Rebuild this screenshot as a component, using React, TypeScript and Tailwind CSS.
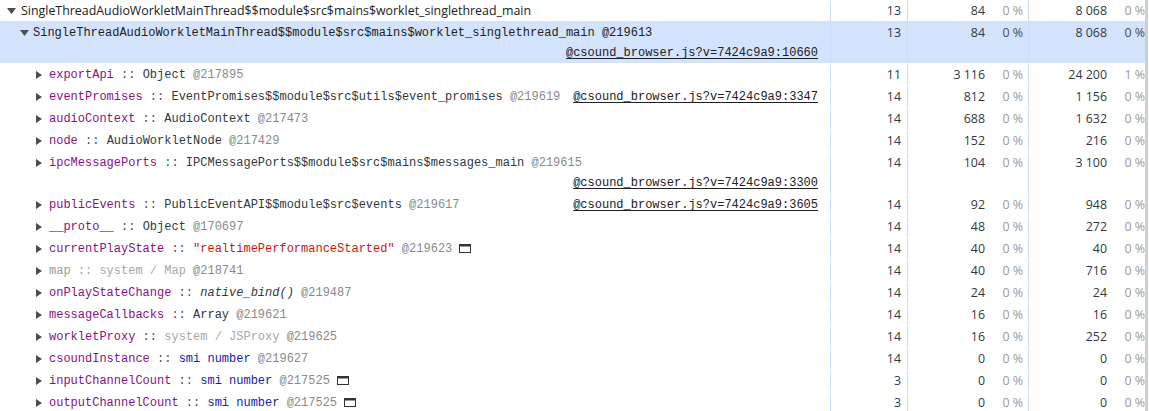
type Seg = { t: string; c?: string };

type Row = {
  level: 0 | 1 | 2;
  expanded?: boolean;
  selected?: boolean;
  sans?: boolean;
  segs: Seg[];
  link?: string;
  wrapLink?: boolean;
  icon?: boolean;
  distance: string;
  shallow: string;
  shallowPct: string;
  retained: string;
  retainedPct: string;
};

const NAME = "text-[#881280]";
const SEP = "text-[#555]";
const CLS = "text-[#303942]";
const ID = "text-[#8a8a8a]";
const SYS = "text-[#a8a8a8]";
const STR = "text-[#c41a16]";
const NUM = "text-[#1a1aa6]";

const LINK = "@csound_browser.js?v=7424c9a9:";

function prop(name: string, type: Seg[], id: string): Seg[] {
  return [{ t: name, c: NAME }, { t: " :: ", c: SEP }, ...type, { t: " " + id, c: ID }];
}

const rows: Row[] = [
  {
    level: 0,
    expanded: true,
    sans: true,
    segs: [{ t: "SingleThreadAudioWorkletMainThread$$module$src$mains$worklet_singlethread_main", c: "text-[#202124]" }],
    distance: "13",
    shallow: "84",
    shallowPct: "0 %",
    retained: "8 068",
    retainedPct: "0 %",
  },
  {
    level: 1,
    expanded: true,
    selected: true,
    segs: [{ t: "SingleThreadAudioWorkletMainThread$$module$src$mains$worklet_singlethread_main @219613", c: "text-[#202124]" }],
    link: LINK + "10660",
    wrapLink: true,
    distance: "13",
    shallow: "84",
    shallowPct: "0 %",
    retained: "8 068",
    retainedPct: "0 %",
  },
  {
    level: 2,
    segs: prop("exportApi", [{ t: "Object", c: CLS }], "@217895"),
    distance: "11",
    shallow: "3 116",
    shallowPct: "0 %",
    retained: "24 200",
    retainedPct: "1 %",
  },
  {
    level: 2,
    segs: prop("eventPromises", [{ t: "EventPromises$$module$src$utils$event_promises", c: CLS }], "@219619"),
    link: LINK + "3347",
    distance: "14",
    shallow: "812",
    shallowPct: "0 %",
    retained: "1 156",
    retainedPct: "0 %",
  },
  {
    level: 2,
    segs: prop("audioContext", [{ t: "AudioContext", c: CLS }], "@217473"),
    distance: "14",
    shallow: "688",
    shallowPct: "0 %",
    retained: "1 632",
    retainedPct: "0 %",
  },
  {
    level: 2,
    segs: prop("node", [{ t: "AudioWorkletNode", c: CLS }], "@217429"),
    distance: "14",
    shallow: "152",
    shallowPct: "0 %",
    retained: "216",
    retainedPct: "0 %",
  },
  {
    level: 2,
    segs: prop("ipcMessagePorts", [{ t: "IPCMessagePorts$$module$src$mains$messages_main", c: CLS }], "@219615"),
    link: LINK + "3300",
    wrapLink: true,
    distance: "14",
    shallow: "104",
    shallowPct: "0 %",
    retained: "3 100",
    retainedPct: "0 %",
  },
  {
    level: 2,
    segs: prop("publicEvents", [{ t: "PublicEventAPI$$module$src$events", c: CLS }], "@219617"),
    link: LINK + "3605",
    distance: "14",
    shallow: "92",
    shallowPct: "0 %",
    retained: "948",
    retainedPct: "0 %",
  },
  {
    level: 2,
    segs: prop("__proto__", [{ t: "Object", c: CLS }], "@170697"),
    distance: "14",
    shallow: "48",
    shallowPct: "0 %",
    retained: "272",
    retainedPct: "0 %",
  },
  {
    level: 2,
    segs: prop("currentPlayState", [{ t: '"realtimePerformanceStarted"', c: STR }], "@219623"),
    icon: true,
    distance: "14",
    shallow: "40",
    shallowPct: "0 %",
    retained: "40",
    retainedPct: "0 %",
  },
  {
    level: 2,
    segs: [
      { t: "map", c: "text-[#9a9a9a]" },
      { t: " :: ", c: SYS },
      { t: "system / Map", c: SYS },
      { t: " @218741", c: ID },
    ],
    distance: "14",
    shallow: "40",
    shallowPct: "0 %",
    retained: "716",
    retainedPct: "0 %",
  },
  {
    level: 2,
    segs: prop("onPlayStateChange", [{ t: "native_bind()", c: "text-[#303942] italic" }], "@219487"),
    distance: "14",
    shallow: "24",
    shallowPct: "0 %",
    retained: "24",
    retainedPct: "0 %",
  },
  {
    level: 2,
    segs: prop("messageCallbacks", [{ t: "Array", c: CLS }], "@219621"),
    distance: "14",
    shallow: "16",
    shallowPct: "0 %",
    retained: "16",
    retainedPct: "0 %",
  },
  {
    level: 2,
    segs: prop("workletProxy", [{ t: "system / JSProxy", c: SYS }], "@219625"),
    distance: "14",
    shallow: "16",
    shallowPct: "0 %",
    retained: "252",
    retainedPct: "0 %",
  },
  {
    level: 2,
    segs: prop("csoundInstance", [{ t: "smi number", c: NUM }], "@219627"),
    distance: "14",
    shallow: "0",
    shallowPct: "0 %",
    retained: "0",
    retainedPct: "0 %",
  },
  {
    level: 2,
    segs: prop("inputChannelCount", [{ t: "smi number", c: NUM }], "@217525"),
    icon: true,
    distance: "3",
    shallow: "0",
    shallowPct: "0 %",
    retained: "0",
    retainedPct: "0 %",
  },
  {
    level: 2,
    segs: prop("outputChannelCount", [{ t: "smi number", c: NUM }], "@217525"),
    icon: true,
    distance: "3",
    shallow: "0",
    shallowPct: "0 %",
    retained: "0",
    retainedPct: "0 %",
  },
];

const levelPad = {
  0: "pl-[5px]",
  1: "pl-[18px]",
  2: "pl-[33px]",
};

const levelGap = {
  0: "ml-[4px]",
  1: "ml-[3px]",
  2: "ml-[4px]",
};

const MONO = "font-['Liberation_Mono',monospace] text-[12px]";
const SANS = "font-['Open_Sans',sans-serif] text-[12.4px]";

function Triangle({ expanded }: { expanded?: boolean }) {
  return (
    <span className="flex h-[20px] w-[12px] shrink-0 items-center justify-center">
      {expanded ? (
        <svg width="9" height="6" viewBox="0 0 9 6">
          <polygon points="0,0 9,0 4.5,6" fill="#4d4d4d" />
        </svg>
      ) : (
        <svg width="6" height="8" viewBox="0 0 6 8">
          <polygon points="0,0 6,4 0,8" fill="#4d4d4d" />
        </svg>
      )}
    </span>
  );
}

function RevealIcon() {
  return (
    <svg width="12" height="9" viewBox="0 0 12 9" className="ml-[7px] inline-block align-[-1px]">
      <rect x="0.5" y="0.5" width="11" height="8" fill="none" stroke="#333" />
      <rect x="1" y="1" width="10" height="1.5" fill="#333" />
    </svg>
  );
}

function NameCell({ row }: { row: Row }) {
  return (
    <div
      className={`w-[831px] shrink-0 border-r border-[#c9daf6] pr-[12px] leading-[20px] ${
        row.sans ? SANS : MONO
      } ${levelPad[row.level]}`}
    >
      <div className="flex">
        <Triangle expanded={row.expanded} />
        <div className={`flex min-w-0 flex-1 flex-wrap ${levelGap[row.level]}`}>
          <span className="h-[20px] whitespace-pre">
            {row.segs.map((s, i) => (
              <span key={i} className={s.c}>
                {s.t}
              </span>
            ))}
            {row.icon && <RevealIcon />}
          </span>
          {row.link && (
            <div className={`h-[20px] ${row.wrapLink ? "flex w-full justify-end" : "ml-auto"}`}>
              <span className="whitespace-pre text-[#202124] underline underline-offset-2">{row.link}</span>
            </div>
          )}
        </div>
      </div>
    </div>
  );
}

function Pct({ value, selected }: { value: string; selected?: boolean }) {
  return (
    <span className={`w-[38px] text-right ${selected ? "text-[#4a4a4a]" : "text-[#9a9a9a]"}`}>{value}</span>
  );
}

function DataRow({ row, first }: { row: Row; first?: boolean }) {
  return (
    <div
      className={`flex ${first ? "h-[21px] pt-px" : "pt-[2px]"} ${row.selected ? "bg-[#d4e3fc]" : "bg-white"}`}
    >
      <NameCell row={row} />
      <div className={`flex ${SANS} leading-[20px]`}>
        <div className="w-[77px] shrink-0 border-r border-[#c9daf6] pr-[6px] text-right text-[#303942]">
          {row.distance}
        </div>
        <div className="flex w-[121px] shrink-0 justify-end border-r border-[#c9daf6] pr-[5px]">
          <span className="text-[#303942]">{row.shallow}</span>
          <Pct value={row.shallowPct} selected={row.selected} />
        </div>
        <div className="flex w-[116px] shrink-0 justify-end">
          <span className="text-[#303942]">{row.retained}</span>
          <Pct value={row.retainedPct} selected={row.selected} />
        </div>
      </div>
    </div>
  );
}

export default function App() {
  return (
    <div className="flex h-[411px] w-[1149px] overflow-hidden bg-white text-[12px]">
      <div className="w-[1145px] shrink-0">
        {rows.map((row, i) => (
          <DataRow key={i} row={row} first={i === 0} />
        ))}
      </div>
      <div className="w-[3px] shrink-0 bg-[#cfcfcf]" />
      <div className="flex-1 bg-white" />
    </div>
  );
}
